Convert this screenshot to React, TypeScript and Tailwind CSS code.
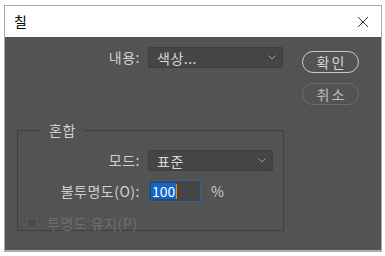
import React from 'react';

const font = { fontFamily: '"Noto Sans CJK KR", "Noto Sans", sans-serif' };

const Chevron = () => (
    <svg width="8" height="5" viewBox="0 0 8 5" fill="none" stroke="#9a9a9a" strokeWidth={1}>
        <polyline points="0.5,0.5 4,4 7.5,0.5" />
    </svg>
);

const Select: React.FC<{ value: string; width: string }> = ({ value, width }) => (
    <div className={`${width} h-[21px] bg-[#454545] border border-[#3e3e3e] rounded-[2px] flex items-center justify-between pl-[8px] pr-[6px] text-[14px] tracking-[0.5px] text-[#d8d8d8]`}>
        <span className="leading-none">{value}</span>
        <Chevron />
    </div>
);

export default function App() {
    return (
        <div className="w-[385px] h-[256px] bg-white pt-[5px] pl-[4px]" style={font}>
            <div className="w-[378px] h-[247px] border border-[#a8a8a8] flex flex-col">
                <div className="h-[31px] bg-white flex items-center justify-between pl-[9px] pr-[12px]">
                    <span className="text-[14px] text-black">칠</span>
                    <svg width="12" height="12" viewBox="0 0 12 12" stroke="#333" strokeWidth={1}>
                        <line x1="1" y1="1" x2="11" y2="11" />
                        <line x1="11" y1="1" x2="1" y2="11" />
                    </svg>
                </div>
                <div className="flex-1 bg-[#535353] border-b border-[#b5b5b5] flex">
                    <div className="w-[285px] flex flex-col pt-[10px] pl-[12px]">
                        <div className="flex items-center h-[21px]">
                            <span className="w-[131px] text-right text-[14px] tracking-[0.5px] text-[#cfcfcf] pr-[8px]">내용:</span>
                            <Select value="색상..." width="w-[135px]" />
                        </div>
                        <fieldset className="mt-[54px] w-[267px] h-[109px] border border-[#3f3f3f] m-0 p-0 pl-[9px]">
                            <legend className="ml-[14px] px-[8px] text-[14px] tracking-[0.5px] text-[#cfcfcf] leading-[16px]">혼합</legend>
                            <div className="flex items-center h-[21px] mt-[12px]">
                                <span className="w-[121px] text-right text-[14px] tracking-[0.5px] text-[#cfcfcf] pr-[8px]">모드:</span>
                                <Select value="표준" width="w-[125px]" />
                            </div>
                            <div className="flex items-center h-[22px] mt-[9px]">
                                <span className="w-[121px] text-right text-[14px] tracking-[0.5px] text-[#cfcfcf] pr-[8px]">불투명도(O):</span>
                                <div className="w-[53px] h-[22px] bg-[#454545] border border-[#2a64a8] flex items-center pl-[2px]">
                                    <span className="bg-[#1166cc] text-white text-[14px] leading-[16px] px-[1px]">100</span>
                                    <span className="w-[1px] h-[15px] bg-[#e08a2a]" />
                                </div>
                                <span className="ml-[10px] text-[14px] text-[#cfcfcf]">%</span>
                            </div>
                            <div className="flex items-center h-[18px] mt-[12px]">
                                <span className="block shrink-0 w-[10px] h-[10px] rounded-none bg-[#4a4a4a] border border-[#5c5c5c]" />
                                <span className="ml-[10px] text-[14px] tracking-[0.5px] text-[#6f6f6f]">투명도 유지(P)</span>
                            </div>
                        </fieldset>
                    </div>
                    <div className="flex flex-col pt-[14px] pl-[12px] gap-[10px]">
                        <button className="w-[57px] h-[22px] rounded-full border border-[#cacaca] text-[14px] tracking-[2px] pl-[2px] text-[#d6d6d6] flex items-center justify-center">확인</button>
                        <button className="w-[57px] h-[22px] rounded-full border border-[#6c6c6c] text-[14px] tracking-[2px] pl-[2px] text-[#bdbdbd] flex items-center justify-center">취소</button>
                    </div>
                </div>
            </div>
        </div>
    );
}
